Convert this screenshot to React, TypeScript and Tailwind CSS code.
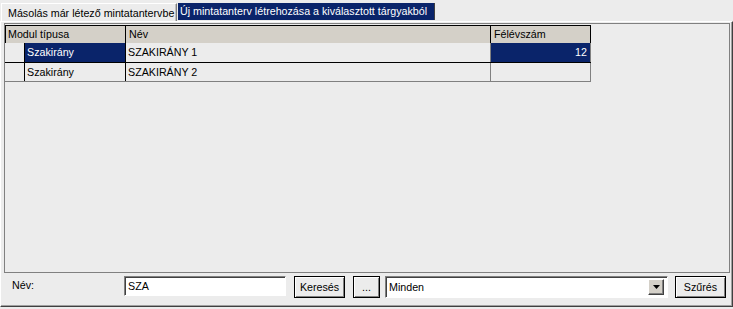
const rows = [
  { type: 'Szakirány', name: 'SZAKIRÁNY 1', sem: '12', selected: true },
  { type: 'Szakirány', name: 'SZAKIRÁNY 2', sem: '', selected: false },
];

function Btn({ label, w }: { label: string; w: string }) {
  return (
    <button
      className={`${w} h-[22px] border border-black bg-[#ececec] shadow-[inset_1px_1px_0_#ffffff,inset_-1px_-1px_0_#808080] text-[10.7px] leading-none text-black`}
    >
      {label}
    </button>
  );
}

export default function App() {
  return (
    <div className="w-[733px] h-[309px] bg-[#ececec] text-black text-[10.7px] leading-none font-['Liberation_Sans',Arial,sans-serif] overflow-hidden select-none">
      {/* tabs */}
      <div className="flex h-[21px] pt-[3px]">
        <div className="ml-px w-[176px] border-t border-l border-white border-r border-r-[#808080] shadow-[inset_-1px_0_0_#c0c0c0] pl-[6px] pt-[4px] whitespace-nowrap overflow-hidden">
          Másolás már létező mintatantervbe
        </div>
        <div className="ml-px w-[257px] h-[17px] bg-[#0a246a] text-white border-r border-r-[#404040] pl-[2px] pt-[3px] whitespace-nowrap">
          Új mintatanterv létrehozása a kiválasztott tárgyakból
        </div>
      </div>

      {/* page */}
      <div className="h-[286px] border-t border-l border-white border-r border-r-[#404040] border-b border-b-[#404040] shadow-[inset_-1px_-1px_0_#a0a0a0] flex flex-col">
        {/* grid */}
        <div className="ml-[3px] mt-px w-[726px] h-[250px] border border-[#808080] pt-px">
          <div className="flex h-[18px] border-t border-l border-black bg-[#d4d0c8] w-[586px]">
            <div className="w-[120px] border-r border-black pl-[2px] pt-[3px]">Modul típusa</div>
            <div className="w-[365px] border-r border-black pl-[3px] pt-[3px]">Név</div>
            <div className="w-[100px] border-r border-black pl-[3px] pt-[3px]">Félévszám</div>
          </div>
          {rows.map((r, i) => (
            <div
              key={i}
              className={`flex w-[586px] border-b ${r.selected ? 'h-[20px] border-black' : 'h-[19px] border-[#808080]'}`}
            >
              <div className="w-[20px] border-r border-black" />
              <div
                className={`w-[101px] border-r border-black pl-[2px] flex items-center ${r.selected ? 'bg-[#0a246a] text-white' : ''}`}
              >
                {r.type}
              </div>
              <div className="w-[365px] border-r border-[#808080] pl-[2px] flex items-center">
                {r.name}
              </div>
              <div
                className={`w-[100px] border-r border-[#808080] pr-[3px] flex items-center justify-end ${r.selected ? 'bg-[#0a246a] text-white' : ''}`}
              >
                {r.sem}
              </div>
            </div>
          ))}
        </div>

        {/* bottom bar */}
        <div className="flex items-start mt-[3px]">
          <div className="ml-[11px] mt-[4px] w-[112px]">Név:</div>
          <div className="w-[162px] h-[20px] bg-white border-t border-l border-[#808080] border-r border-r-white border-b border-b-white shadow-[inset_1px_1px_0_#404040] pl-[3px] flex items-center">
            SZA
          </div>
          <div className="ml-[8px]">
            <Btn label="Keresés" w="w-[51px]" />
          </div>
          <div className="ml-[8px]">
            <Btn label="..." w="w-[27px]" />
          </div>
          <div className="ml-[5px] w-[283px] h-[22px] bg-white border-t border-l border-[#808080] border-r border-r-white border-b border-b-white shadow-[inset_1px_1px_0_#404040] flex items-center pl-[3px] pr-[3px]">
            <span className="flex-1">Minden</span>
            <div className="w-[16px] h-[16px] bg-[#d4d0c8] border border-t-white border-l-white border-r-[#404040] border-b-[#404040] shadow-[inset_-1px_-1px_0_#808080] flex items-center justify-center">
              <svg width="7" height="4" viewBox="0 0 7 4">
                <path d="M0 0h7L3.5 4z" fill="#000" />
              </svg>
            </div>
          </div>
          <div className="ml-[7px]">
            <Btn label="Szűrés" w="w-[51px]" />
          </div>
        </div>
      </div>
    </div>
  );
}
